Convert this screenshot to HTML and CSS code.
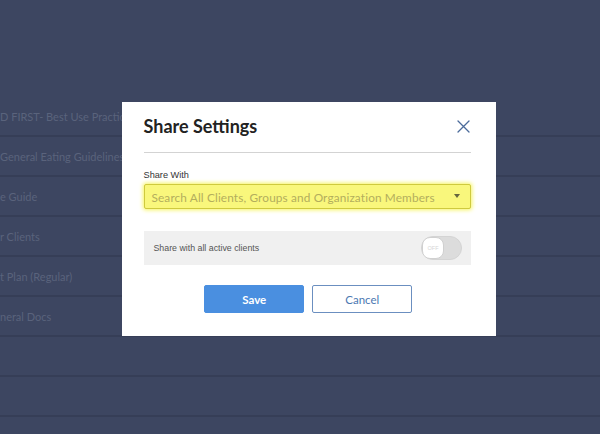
FILE: index.html
```html
<!DOCTYPE html>
<html>
<head>
<meta charset="utf-8">
<link rel="stylesheet" href="styles.css">
</head>
<body>
<div class="page">
  <ul class="doc-list">
    <li class="doc-row"><span class="doc-name">D FIRST- Best Use Practices</span></li>
    <li class="doc-row"><span class="doc-name">General Eating Guidelines</span></li>
    <li class="doc-row"><span class="doc-name">e Guide</span></li>
    <li class="doc-row"><span class="doc-name">r Clients</span></li>
    <li class="doc-row"><span class="doc-name">t Plan (Regular)</span></li>
    <li class="doc-row"><span class="doc-name">neral Docs</span></li>
    <li class="doc-row"><span class="doc-name"></span></li>
    <li class="doc-row"><span class="doc-name"></span></li>
  </ul>
</div>

<div class="modal">
  <div class="modal-header">
    <h2 class="modal-title">Share Settings</h2>
    <button class="close-btn" aria-label="Close">
      <svg width="13" height="13" viewBox="0 0 13 13"><path d="M1 1 L12 12 M12 1 L1 12" stroke="#4b6b9b" stroke-width="1.3" fill="none" stroke-linecap="round"/></svg>
    </button>
  </div>
  <label class="field-label">Share With</label>
  <div class="select">
    <span class="select-placeholder">Search All Clients, Groups and Organization Members</span>
    <span class="select-caret"></span>
  </div>
  <div class="toggle-row">
    <span class="toggle-label">Share with all active clients</span>
    <span class="toggle">
      <span class="toggle-knob">OFF</span>
    </span>
  </div>
  <div class="actions">
    <button class="btn btn-primary">Save</button>
    <button class="btn btn-secondary">Cancel</button>
  </div>
</div>
</body>
</html>
```

FILE: styles.css
```css
html, body {
  margin: 0;
  padding: 0;
}
body {
  background: #3d4661;
  width: 600px;
  height: 434px;
  overflow: hidden;
  font-family: Lato, "Open Sans", sans-serif;
}
.page {
  padding-top: 97px;
}
.doc-list {
  list-style: none;
  margin: 0;
  padding: 0;
}
.doc-row {
  height: 38px;
  border-bottom: 2px solid #363e57;
  display: flex;
  align-items: center;
}
.doc-name {
  font-size: 11px;
  color: #5a637c;
  white-space: nowrap;
  padding-top: 1px;
}

.modal {
  position: absolute;
  left: 122px;
  top: 102px;
  width: 374px;
  height: 234px;
  box-sizing: border-box;
  padding: 12px 25px 0 21.5px;
  background: #ffffff;
}
.modal-header {
  display: flex;
  justify-content: space-between;
  align-items: center;
  padding-bottom: 14px;
  border-bottom: 1px solid #d3d3d3;
}
.modal-title {
  margin: 0;
  font-family: Lato, sans-serif;
  font-weight: 700;
  font-size: 18px;
  line-height: 24px;
  color: #222;
}
.close-btn {
  border: 0;
  background: none;
  padding: 0;
  margin-right: 1px;
  width: 13px;
  height: 13px;
  display: flex;
}
.field-label {
  display: block;
  margin-top: 16px;
  font-family: "Liberation Sans", Arial, sans-serif;
  font-size: 9.2px;
  line-height: 12px;
  color: #333;
}
.select {
  margin-top: 3px;
  height: 25px;
  box-sizing: border-box;
  border: 1px solid #cfca3e;
  border-radius: 2px;
  background: #f9f77c;
  box-shadow: 0 0 4px 1px #f6f45c;
  display: flex;
  align-items: center;
  justify-content: space-between;
  padding: 0 10px 0 7px;
}
.select-placeholder {
  font-family: Lato, sans-serif;
  font-size: 11.8px;
  letter-spacing: 0.14px;
  color: #b3ae5c;
  white-space: nowrap;
  padding-top: 1px;
}
.select-caret {
  width: 0;
  height: 0;
  border-left: 3.5px solid transparent;
  border-right: 3.5px solid transparent;
  border-top: 4px solid #66663e;
  margin-top: -2px;
}
.toggle-row {
  margin-top: 22px;
  height: 34px;
  background: #f0f0f0;
  display: flex;
  align-items: center;
  justify-content: space-between;
  padding: 0 9px 0 10px;
}
.toggle-label {
  font-family: "Liberation Sans", Arial, sans-serif;
  font-size: 8.8px;
  color: #555;
}
.toggle {
  width: 41px;
  height: 24px;
  box-sizing: border-box;
  border-radius: 12px;
  background: #dcdcdc;
  border: 1px solid #d4d4d4;
  display: flex;
  align-items: center;
}
.toggle-knob {
  width: 22px;
  height: 22px;
  box-sizing: border-box;
  border-radius: 8px;
  background: #fff;
  border: 1px solid #d0d0d0;
  font-family: "Liberation Sans", Arial, sans-serif;
  font-size: 5.5px;
  color: #d6d6d6;
  display: flex;
  align-items: center;
  justify-content: center;
}
.actions {
  margin-top: 20px;
  display: flex;
  justify-content: center;
  gap: 8px;
  padding-left: 2px;
}
.btn {
  width: 100px;
  height: 28px;
  box-sizing: border-box;
  border-radius: 2px;
  font-family: Lato, sans-serif;
  font-size: 11.5px;
  cursor: pointer;
}
.btn-primary {
  background: #4a8fe0;
  border: 1px solid #4a8fe0;
  color: #fff;
  font-weight: 700;
}
.btn-secondary {
  background: #fff;
  border: 1px solid #6b8fc0;
  color: #4b78b2;
  font-weight: 400;
}
```
